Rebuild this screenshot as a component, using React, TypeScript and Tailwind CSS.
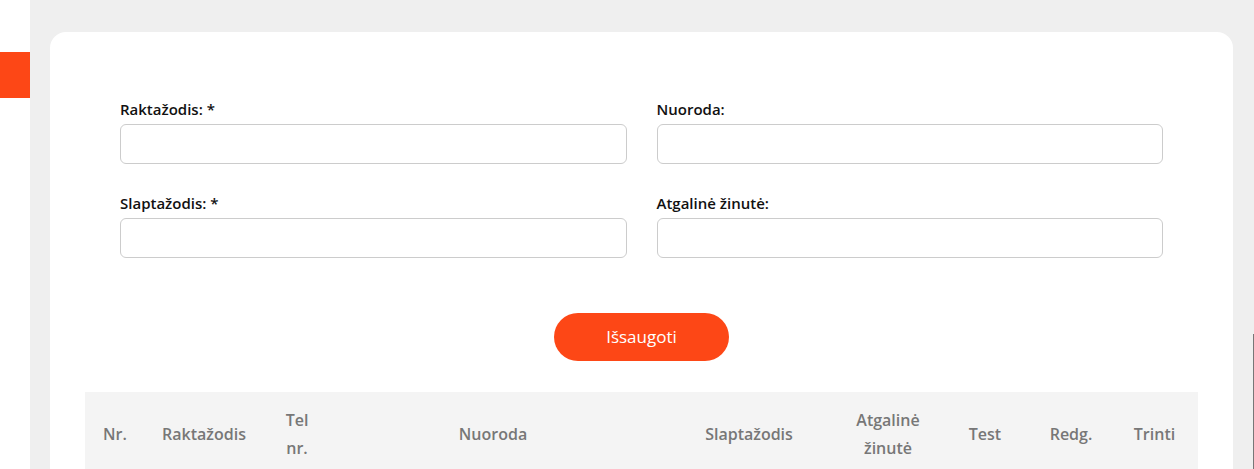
const fields = [
  { label: 'Raktažodis: *' },
  { label: 'Nuoroda:' },
  { label: 'Slaptažodis: *' },
  { label: 'Atgalinė žinutė:' },
];

const columns = [
  { title: 'Nr.', w: 'w-[60px]' },
  { title: 'Raktažodis', w: 'w-[118px]' },
  { title: 'Tel nr.', w: 'w-[68px]' },
  { title: 'Nuoroda', w: 'w-[324px]' },
  { title: 'Slaptažodis', w: 'w-[188px]' },
  { title: 'Atgalinė žinutė', w: 'w-[90px]' },
  { title: 'Test', w: 'w-[104px]' },
  { title: 'Redg.', w: 'w-[68px]' },
  { title: 'Trinti', w: 'w-[93px] pl-[18px]' },
];

export default function App() {
  return (
    <div
      className="flex h-[469px] w-[1254px] overflow-hidden bg-[#efefef]"
      style={{ fontFamily: "'Open Sans', Lato, sans-serif" }}
    >
      {/* sidebar */}
      <aside className="w-[30px] shrink-0 bg-white pt-[52px]">
        <div className="h-[46px] bg-[#fd4716]" />
      </aside>

      <main className="relative flex-1 pl-[20px] pr-[21px] pt-[32px]">
        <div className="rounded-t-[16px] bg-white px-[35px] pt-[66px]">
          <form className="grid grid-cols-2 gap-x-[30px] gap-y-[28px] px-[35px]">
            {fields.map((f) => (
              <div key={f.label} className="flex flex-col">
                <label className="mb-[4px] text-[15px] font-semibold leading-[22px] text-[#111]">
                  {f.label}
                </label>
                <input className="h-[40px] rounded-[6px] border border-[#cccccc] bg-white px-3 outline-none" />
              </div>
            ))}
          </form>

          <div className="flex justify-center pt-[55px]">
            <button className="h-[48px] w-[175px] rounded-full bg-[#fd4716] text-[17px] font-normal text-white">
              Išsaugoti
            </button>
          </div>

          <div className="mt-[31px] flex bg-[#f4f4f4] py-[14px]">
            {columns.map((c) => (
              <div
                key={c.title}
                className={`${c.w} flex shrink-0 items-center justify-center px-[12px] text-center text-[16px] font-semibold leading-[28px] text-[#777]`}
              >
                {c.title}
              </div>
            ))}
          </div>
        </div>

        <div className="absolute right-0 top-[334px] h-[140px] w-px bg-[#777]" />
      </main>
    </div>
  );
}
